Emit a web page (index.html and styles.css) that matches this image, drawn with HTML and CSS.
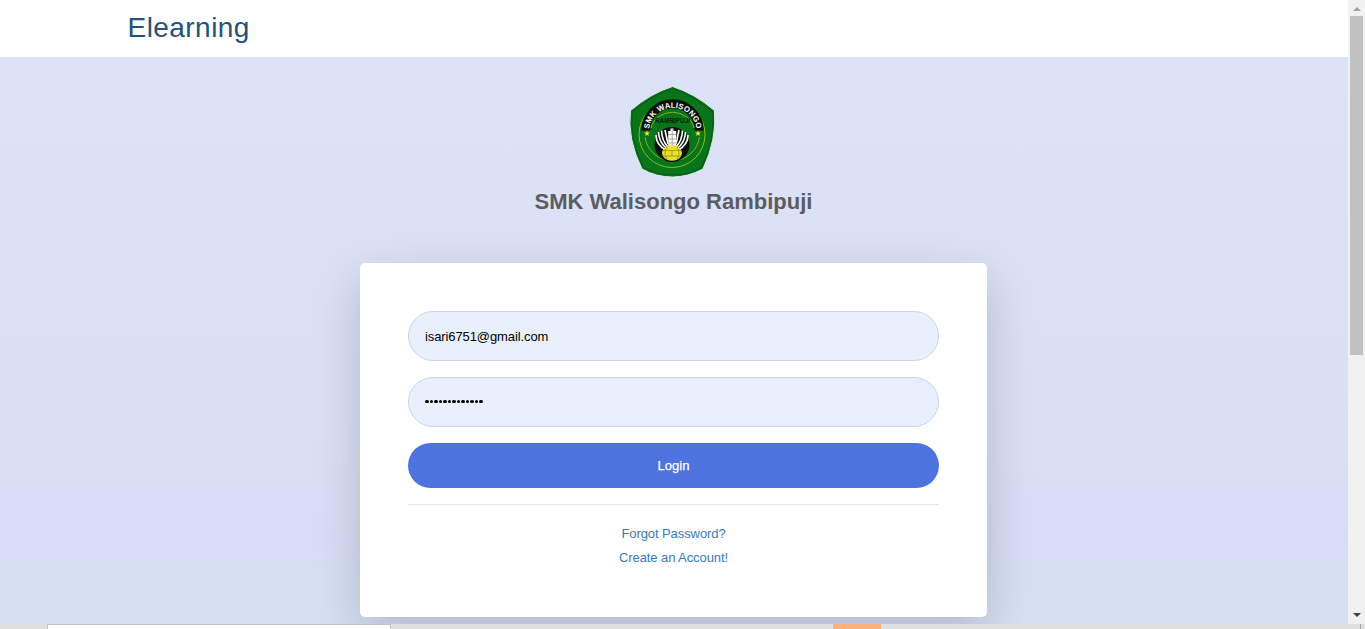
FILE: index.html
```html
<!DOCTYPE html>
<html lang="en">
<head>
<meta charset="utf-8">
<title>Elearning</title>
<link rel="stylesheet" href="styles.css">
</head>
<body>
<div class="window">
  <div class="viewport">
    <div class="page">
      <header class="topbar"><a class="brand">Elearning</a></header>
      <main class="content">
        <svg class="logo" viewBox="8 5 90 94" role="img" aria-label="SMK Walisongo Rambipuji">
          <defs>
            <path id="name-arc" d="M29 50 A23.800 23.800 0 0 1 76.500 50"/>
            <path id="star" d="M0-3 .8-.9 3-.9 1.2.4 1.9 2.6 0 1.3-1.9 2.6-1.2.4-3-.9-.8-.9Z"/>
          </defs>
          <path class="crest-edge" d="M52.5 6.500 Q74 13 94.500 30.500 Q97 59 83 89 Q68 97 52.500 97 Q36 97 22 89 Q7 59 10.500 30.500 Q31 13 52.500 6.500Z"/>
          <path class="crest-line" d="M52.500 8.700 Q73 15 92.700 31.500 Q95 59 81.500 87.500 Q67 95 52.500 95 Q38 95 23.500 87.500 Q9.500 59 12.300 31.500 Q32 15 52.500 8.700Z"/>
          <circle class="ring" cx="52" cy="54.500" r="33"/>
          <path class="band" d="M25.800 50.500 A26.700 26.700 0 0 1 79.200 50.500"/>
          <path class="inner" d="M25 57 A27.500 27.500 0 0 0 79.500 57M31 48 A22 20 0 0 1 74 48"/>
          <text class="arc-text"><textPath href="#name-arc" startOffset="1" textLength="69">SMK WALISONGO</textPath></text>
          <text class="town" x="35" y="42.700" textLength="35" lengthAdjust="spacingAndGlyphs">RAMBIPUJI</text>
          <circle class="emblem" cx="52" cy="64.500" r="17.500"/>
          <g class="wings">
            <path d="M36 55 Q36 65 46 70"/><path d="M38.500 52 Q39 63 47 68.500"/><path d="M41.500 50.500 Q42 61 48 67"/><path d="M45 50 L48 64"/>
            <path d="M68 55 Q68 65 58 70"/><path d="M65.500 52 Q65 63 57 68.500"/><path d="M62.500 50.500 Q62 61 56 67"/><path d="M59 50 L56 64"/>
          </g>
          <path class="tower" d="M48.200 51H50.500V48.500H53.500V51H56.200V67H48.200Z"/>
          <path class="tower-lines" d="M52.200 49V66M48 54.500H57M48 59H57M48 63H57"/>
          <ellipse class="globe" cx="52" cy="73" rx="10" ry="7.700"/>
          <path class="globe-lines" d="M43 70.500H61M43 76H61M52 70V76M47 67Q43 73 47 79M57 67Q61 73 57 79"/>
          <use class="star" href="#star" x="27" y="53.500"/>
          <use class="star" href="#star" x="78" y="53.500"/>
        </svg>
        <h1 class="school">SMK Walisongo Rambipuji</h1>
        <form class="card">
          <div class="field email">isari6751@gmail.com</div>
          <div class="field password" aria-label="Password"><i></i><i></i><i></i><i></i><i></i><i></i><i></i><i></i><i></i><i></i><i></i><i></i><i></i></div>
          <button class="login" type="button">Login</button>
          <hr class="rule">
          <nav class="links"><a class="forgot">Forgot Password?</a><a class="create">Create an Account!</a></nav>
        </form>
      </main>
    </div>
    <div class="scrollbar">
      <svg class="arrow up" viewBox="0 0 8 4"><path d="M0 4 4 0 8 4Z"/></svg>
      <div class="thumb"></div>
      <svg class="arrow down" viewBox="0 0 8 4"><path d="M0 0 4 4 8 0Z"/></svg>
    </div>
  </div>
  <div class="taskbar"><div class="search"></div><div class="task"></div><div class="desktop"></div></div>
</div>
</body>
</html>
```
FILE: styles.css
```css
* { box-sizing: border-box; }
body { margin: 0; font-family: "Liberation Sans", Arial, sans-serif; }
.window { display: flex; flex-direction: column; width: 1365px; height: 629px; overflow: hidden; }
.viewport { display: flex; height: 624px; overflow: hidden; }
.page { width: 1348px; height: 624px; overflow: hidden; background: linear-gradient(#dce2f7 57px, #d9dff5 450px, #d8ddf6 540px, #d6dff3 580px); }
.topbar { height: 57px; padding: 11px 0 0 127.5px; background: #fff; }
.brand { font-size: 28px; line-height: 34px; letter-spacing: .45px; color: #24527a; }
.content { display: flex; flex-direction: column; align-items: center; width: 1347px; padding-top: 28px; }
.logo { width: 90px; height: 94px; margin-right: 2px; }
.crest-edge { fill: #08751b; stroke: #dbeedd; stroke-width: 1; }
.crest-line { fill: #08751b; stroke: #145723; stroke-width: 1.2; }
.ring { fill: #08751b; stroke: #91bd20; stroke-width: 1; }
.band { fill: none; stroke: #061008; stroke-width: 9; }
.inner { fill: none; stroke: #b9cc28; stroke-width: .7; }
.arc-text { fill: #fff; font-size: 7.7px; font-weight: bold; }
.town { fill: #042508; font-size: 7.5px; font-weight: bold; }
.emblem { fill: #071309; }
.wings { fill: none; stroke: #fff; stroke-width: 1.6; }
.tower { fill: #fff; }
.tower-lines { fill: none; stroke: #777; stroke-width: .6; }
.globe { fill: #e8df2a; }
.globe-lines { fill: none; stroke: #8d8519; stroke-width: .7; }
.star { fill: #f4e62b; }
.school { margin: 10px 0 0; font-size: 22px; line-height: 26px; color: #5b5c62; }
.card { width: 627px; height: 354px; margin: 48px 0 0; padding: 48px; background: #fff; border-radius: 5px; box-shadow: 0 16px 48px rgba(0, 0, 0, .175); }
.field { display: flex; align-items: center; height: 50px; margin-bottom: 16px; padding: 0 16px; border: 1px solid #cdd4e2; border-radius: 25px; background: #e8f0fe; color: #000; font-size: 13px; }
.email { letter-spacing: -.1px; }
.password { gap: 1px; padding-bottom: 1px; }
.password i { width: 3.5px; height: 3.5px; border-radius: 50%; background: #000; }
.login { display: block; width: 100%; height: 45px; padding: 0; border: 0; border-radius: 23px; background: #4e73df; color: #fff; font: 13px "Liberation Sans", Arial, sans-serif; -webkit-text-stroke: .25px #fff; }
.rule { height: 1px; margin: 16px 0 17px; border: 0; background: #e2e2e5; }
.links { display: flex; flex-direction: column; align-items: center; font-size: 13px; line-height: 24px; letter-spacing: -.08px; color: #397abb; }
.scrollbar { display: flex; flex-direction: column; align-items: center; width: 17px; height: 624px; padding: 7px 0 7px; background: #f1f1f1; }
.arrow { width: 8px; height: 4px; }
.up { fill: #a0a0a0; }
.thumb { width: 13px; height: 339px; margin-top: 5px; background: #c1c1c1; }
.down { margin-top: auto; fill: #404040; }
.taskbar { display: flex; height: 5px; background: #dfdfdf; }
.search { width: 344px; margin-left: 47px; border: 1px solid #c4c4c4; border-bottom: 0; background: #fff; }
.task { width: 48px; margin-left: 442px; background: #fab17b; }
.desktop { width: 5px; margin-left: auto; border-left: 1px solid #a5a5a5; }
```
